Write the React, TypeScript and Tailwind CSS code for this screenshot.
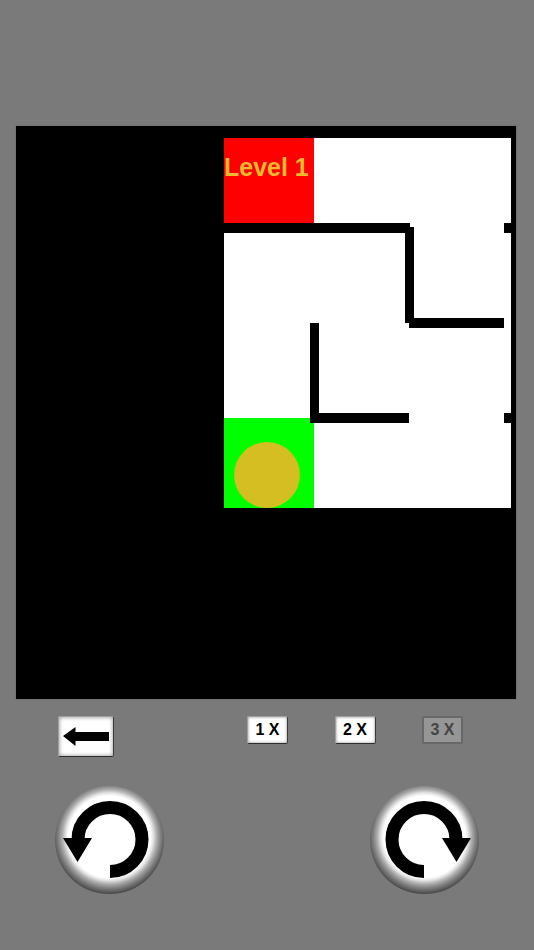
const walls = [
  "left-0 top-[85px] w-[186px] h-[10px]",
  "left-[181px] top-[89px] w-[9px] h-[96px]",
  "left-[185px] top-[180px] w-[95px] h-[9.5px]",
  "left-[280px] top-[85px] w-[7px] h-[10px]",
  "left-[85.5px] top-[185px] w-[9.5px] h-[100px]",
  "left-[90px] top-[275px] w-[95px] h-[10px]",
  "left-[280px] top-[275px] w-[7px] h-[10px]",
];

function SpeedButton({ label, disabled }: { label: string; disabled?: boolean }) {
  if (disabled) {
    return (
      <div className="w-[41px] h-[28px] flex items-center justify-center rounded-[2px] border-2 border-[#686868] bg-[#969696] text-[#444] text-[16px] font-bold">
        {label}
      </div>
    );
  }
  return (
    <div className="w-[41px] h-[28px] flex items-center justify-center rounded-[2px] bg-white border border-[#a0a0a0] border-r-[#3c3c3c] border-b-[#2c2c2c] shadow-[inset_0_0_3px_#888] text-black text-[16px] font-bold">
      {label}
    </div>
  );
}

function RotateButton({ flip }: { flip?: boolean }) {
  return (
    <div className="w-[109px] h-[108px] rounded-full bg-[radial-gradient(circle_57px_at_50%_47%,#ffffff_72%,#e2e2e2_77%,#adadad_83%,#808080_90%,#4a4a4a_100%)]">
      <svg width="109" height="108" viewBox="0 0 109 108" className={flip ? "-scale-x-100" : ""}>
        <path d="M55 85.5 A32 32 0 1 0 23 53.5" fill="none" stroke="#000" strokeWidth="13" />
        <path d="M8 52 L37 52 L22.5 76 Z" fill="#000" />
      </svg>
    </div>
  );
}

export default function App() {
  return (
    <div className="w-[534px] h-[950px] bg-[#7a7a7a] pt-[126px] font-['Liberation_Sans',Arial,sans-serif] overflow-hidden">
      {/* board */}
      <div className="ml-[16px] w-[500px] h-[573px] bg-black pt-[12px] pl-[208px] shadow-[0_0_1px_#555]">
        <div className="relative w-[286.5px] h-[370px] bg-white">
          <div className="absolute left-0 top-0 w-[90px] h-[85px] bg-[#ff0000] pt-[14px] text-[25px] leading-[30px] font-bold text-[#edb92e] whitespace-nowrap">
            Level 1
          </div>
          <div className="absolute left-0 top-[280px] w-[90px] h-[90px] bg-[#00ff00]" />
          {walls.map(w => (
            <div key={w} className={`absolute bg-black ${w}`} />
          ))}
          <div className="absolute left-[10px] top-[304px] w-[66px] h-[66px] rounded-full bg-[#d4be22]" />
        </div>
      </div>

      {/* speed row */}
      <div className="flex items-start pl-[58px] pt-[17px]">
        <div className="w-[56px] h-[41px] rounded-[2px] bg-white border border-[#a0a0a0] border-r-[#3c3c3c] border-b-[#2c2c2c] shadow-[inset_0_0_4px_#888]">
          <svg width="54" height="39" viewBox="0 0 54 39">
            <path d="M4 19 L16.5 10 V15 H50 V24 H16.5 V29 Z" fill="#000" />
          </svg>
        </div>
        <div className="ml-[133px] flex gap-[46.5px]">
          <SpeedButton label="1 X" />
          <SpeedButton label="2 X" />
          <SpeedButton label="3 X" disabled />
        </div>
      </div>

      {/* rotate row */}
      <div className="flex pl-[55px] pt-[29px] gap-[206px]">
        <RotateButton />
        <RotateButton flip />
      </div>
    </div>
  );
}
